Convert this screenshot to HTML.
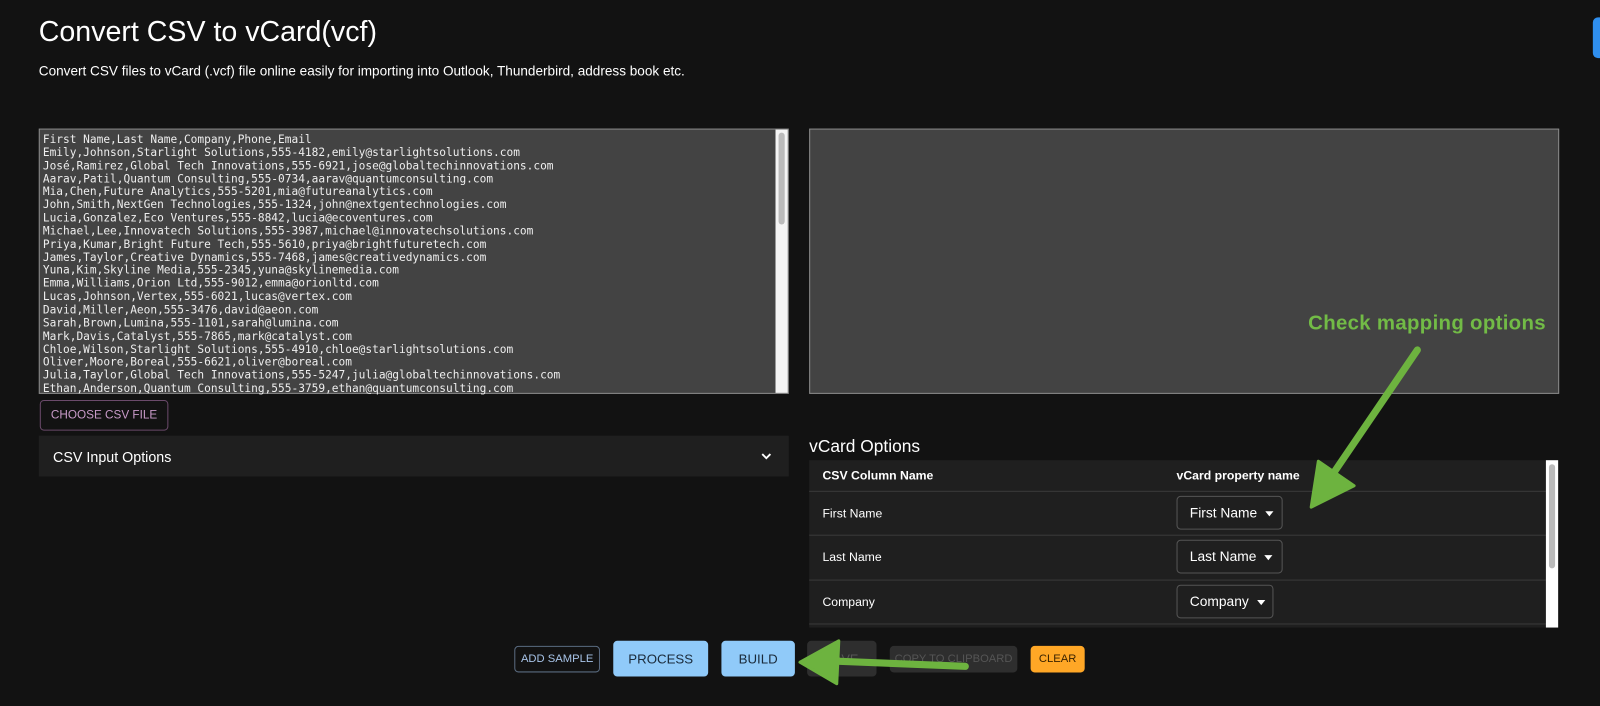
<!DOCTYPE html>
<html><head><meta charset="utf-8"><style>
*{box-sizing:border-box}
html,body{margin:0;width:1600px;height:706px;background:#121212;overflow:hidden}
#w{position:absolute;left:0;top:0;width:1568px;height:692px;transform:scale(1.0204);transform-origin:0 0;font-family:"Liberation Sans",sans-serif;color:#fff}
.abs{position:absolute}
h1{position:absolute;left:38px;top:15px;margin:0;font-weight:400;font-size:28px}
.sub{left:38px;top:62px;font-size:13.3px}
.ta{position:absolute;background:#434343;border:1px solid #8a8a8a;}
pre{margin:0;padding:4px 3px 2px;font-family:"DejaVu Sans Mono",monospace;font-size:10.95px;line-height:12.85px;color:#eee;white-space:pre;overflow:hidden}
.btn{position:absolute;border-radius:4px;font-size:12.5px;display:flex;align-items:center;justify-content:center}
.row{position:absolute;left:0;width:722px;border-top:1px solid #3a3a3a;font-size:12px}
.sel{position:absolute;left:360px;border:1px solid #555;border-radius:4px;height:33px;font-size:13.5px;display:flex;align-items:center;padding-left:12px}
.sel:after{content:"";border:4px solid transparent;border-top:5px solid #fff;margin-left:8px;margin-top:5px}
</style></head><body><div id="w">
<h1>Convert CSV to vCard(vcf)</h1>
<div class="abs sub">Convert CSV files to vCard (.vcf) file online easily for importing into Outlook, Thunderbird, address book etc.</div>
<div class="abs" style="left:1561px;top:17px;width:10px;height:40px;background:#2f8fef;border-radius:5px 0 0 5px"></div>

<div class="ta" style="left:38px;top:126px;width:735px;height:260px"><pre>First Name,Last Name,Company,Phone,Email
Emily,Johnson,Starlight Solutions,555-4182,emily@starlightsolutions.com
José,Ramirez,Global Tech Innovations,555-6921,jose@globaltechinnovations.com
Aarav,Patil,Quantum Consulting,555-0734,aarav@quantumconsulting.com
Mia,Chen,Future Analytics,555-5201,mia@futureanalytics.com
John,Smith,NextGen Technologies,555-1324,john@nextgentechnologies.com
Lucia,Gonzalez,Eco Ventures,555-8842,lucia@ecoventures.com
Michael,Lee,Innovatech Solutions,555-3987,michael@innovatechsolutions.com
Priya,Kumar,Bright Future Tech,555-5610,priya@brightfuturetech.com
James,Taylor,Creative Dynamics,555-7468,james@creativedynamics.com
Yuna,Kim,Skyline Media,555-2345,yuna@skylinemedia.com
Emma,Williams,Orion Ltd,555-9012,emma@orionltd.com
Lucas,Johnson,Vertex,555-6021,lucas@vertex.com
David,Miller,Aeon,555-3476,david@aeon.com
Sarah,Brown,Lumina,555-1101,sarah@lumina.com
Mark,Davis,Catalyst,555-7865,mark@catalyst.com
Chloe,Wilson,Starlight Solutions,555-4910,chloe@starlightsolutions.com
Oliver,Moore,Boreal,555-6621,oliver@boreal.com
Julia,Taylor,Global Tech Innovations,555-5247,julia@globaltechinnovations.com
Ethan,Anderson,Quantum Consulting,555-3759,ethan@quantumconsulting.com</pre>
<div class="abs" style="right:0;top:0;width:12px;height:258px;background:#f4f4f4"></div>
<div class="abs" style="right:3px;top:3px;width:6px;height:90px;background:#bbb;border-radius:3px"></div>
</div>
<div class="ta" style="left:793px;top:126px;width:735px;height:260px"></div>

<div class="btn" style="left:39px;top:392px;width:126px;height:30px;border:1px solid #6a4a6a;color:#c89ac8;font-size:11.5px">CHOOSE CSV FILE</div>
<div class="abs" style="left:38px;top:427px;width:735px;height:40px;background:#1f1f1f;font-size:14px;padding:13px 0 0 14px">CSV Input Options
<svg class="abs" style="right:16px;top:15px" width="12" height="10" viewBox="0 0 12 10"><path d="M2 3l4 4 4-4" stroke="#fff" stroke-width="1.8" fill="none"/></svg></div>

<div class="abs" style="left:793px;top:428px;font-size:17px">vCard Options</div>
<div class="abs" style="left:793px;top:451px;width:734px;height:164px;background:#1f1f1f">
 <div class="abs" style="left:13px;top:8px;font-size:12px;font-weight:bold">CSV Column Name</div>
 <div class="abs" style="left:360px;top:8px;font-size:12px;font-weight:bold">vCard property name</div>
 <div class="row" style="top:30px;height:44px"><span class="abs" style="left:13px;top:14px">First Name</span><div class="sel" style="top:4px;width:104px">First Name</div></div>
 <div class="row" style="top:73px;height:44px"><span class="abs" style="left:13px;top:14px">Last Name</span><div class="sel" style="top:4px;width:104px">Last Name</div></div>
 <div class="row" style="top:117px;height:44px"><span class="abs" style="left:13px;top:14px">Company</span><div class="sel" style="top:4px;width:95px">Company</div></div>
 <div class="abs" style="left:0;top:160px;width:722px;border-top:1px solid #3a3a3a"></div>
 <div class="abs" style="left:722px;top:0;width:12px;height:164px;background:#fff"></div>
 <div class="abs" style="left:725px;top:4px;width:6px;height:102px;background:#bbb;border-radius:3px"></div>
</div>

<div class="btn" style="left:504px;top:633px;width:84px;height:26px;border:1px solid #5a6b80;color:#a8c4e8;font-size:11px">ADD SAMPLE</div>
<div class="btn" style="left:601px;top:628px;width:93px;height:35px;background:#90caf9;color:#1a2a3a;font-size:13px">PROCESS</div>
<div class="btn" style="left:707px;top:628px;width:72px;height:35px;background:#90caf9;color:#1a2a3a;font-size:13px">BUILD</div>
<div class="btn" style="left:791px;top:628px;width:68px;height:35px;background:#2e2e2e;color:#555">SAVE</div>
<div class="btn" style="left:872px;top:633px;width:125px;height:26px;background:#2e2e2e;color:#555;font-size:11px">COPY TO CLIPBOARD</div>
<div class="btn" style="left:1010px;top:633px;width:53px;height:26px;background:#ffa726;color:#3a2200;font-size:11px">CLEAR</div>

<div class="abs" style="left:1282px;top:306px;font-size:20px;font-weight:bold;color:#72bb46;letter-spacing:0.3px">Check mapping options</div>
<svg class="abs" style="left:0;top:0" width="1568" height="692">
<path d="M1389 343 L1308 462" stroke="#6db33f" stroke-width="7" stroke-linecap="round"/>
<path d="M1285 497 L1292 452 L1327 476 Z" fill="#6db33f" stroke="#6db33f" stroke-width="3" stroke-linejoin="round"/>
<path d="M946 653 L820 648" stroke="#6db33f" stroke-width="7" stroke-linecap="round"/>
<path d="M784 649 L822 628 L820 670 Z" fill="#6db33f" stroke="#6db33f" stroke-width="3" stroke-linejoin="round"/>
</svg>
</div></body></html>
